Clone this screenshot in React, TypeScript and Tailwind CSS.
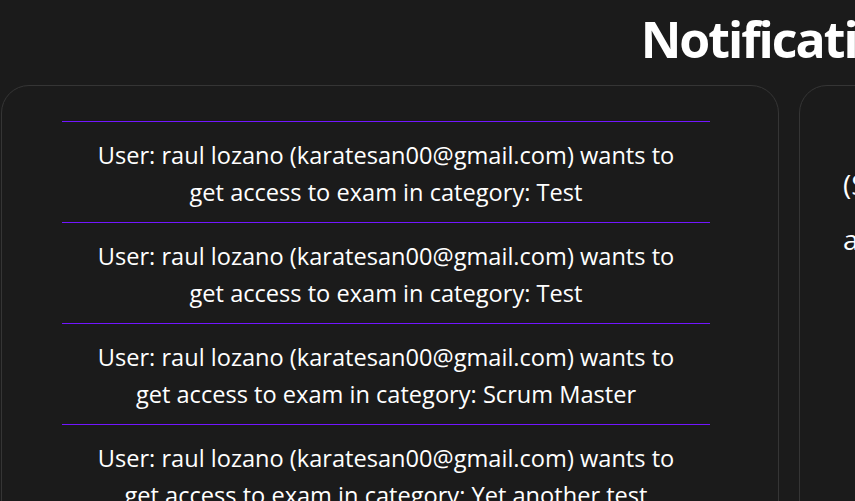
const requests = [
  { name: 'raul lozano', email: 'karatesan00@gmail.com', category: 'Test' },
  { name: 'raul lozano', email: 'karatesan00@gmail.com', category: 'Test' },
  { name: 'raul lozano', email: 'karatesan00@gmail.com', category: 'Scrum Master' },
  { name: 'raul lozano', email: 'karatesan00@gmail.com', category: 'Yet another test' },
];

export default function App() {
  return (
    <div className="min-h-screen w-full overflow-hidden bg-[#1b1b1b] text-white font-['Open_Sans',sans-serif]">
      <div className="w-[1580px]">
        <h1 className="pt-[7px] text-center text-[50px] font-bold leading-[64px] tracking-[-2px]">Notifications</h1>
        <div className="mt-[14px] ml-px flex gap-5">
          <section className="h-[600px] w-[778px] shrink-0 rounded-[28px] border border-[#353535] pt-[35px]">
            <ul className="ml-[60px] w-[648px]">
              {requests.map((r, i) => (
                <li
                  key={i}
                  className="border-t border-[#7216ff] px-[30px] pt-[15px] pb-[11px] text-center text-[23.6px] leading-[37px]"
                >
                  User: {r.name} ({r.email}) wants to get access to exam in category: {r.category}
                </li>
              ))}
            </ul>
          </section>
          <section className="h-[600px] w-[778px] shrink-0 rounded-[28px] border border-[#353535] pt-[71px] pl-[43px] pr-8">
            <p className="text-[28px] leading-[55px]">
              (Select a notification
              <br />
              approve or deny the access request)
            </p>
          </section>
        </div>
      </div>
    </div>
  );
}
